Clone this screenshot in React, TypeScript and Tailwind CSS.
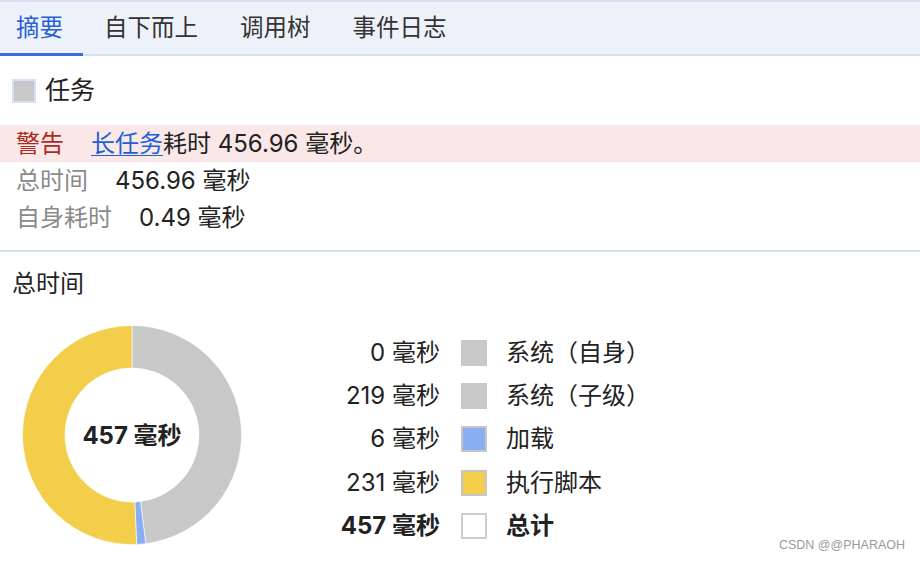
import React from "react";

const CX = 110;
const CY = 110;
const RO = 109.5;
const RI = 67;

function arcPath(a0: number, a1: number) {
  const p = (a: number, r: number) => {
    const rad = ((a - 90) * Math.PI) / 180;
    return [CX + r * Math.cos(rad), CY + r * Math.sin(rad)];
  };
  const large = a1 - a0 > 180 ? 1 : 0;
  const [x0, y0] = p(a0, RO);
  const [x1, y1] = p(a1, RO);
  const [x2, y2] = p(a1, RI);
  const [x3, y3] = p(a0, RI);
  return `M${x0} ${y0} A${RO} ${RO} 0 ${large} 1 ${x1} ${y1} L${x2} ${y2} A${RI} ${RI} 0 ${large} 0 ${x3} ${y3} Z`;
}

const segs = [
  { v: 219.3, c: "#c8c8c8" },
  { v: 6.1, c: "#8aaef3" },
  { v: 231.56, c: "#f2ce4b" },
];

function Donut() {
  const total = segs.reduce((s, x) => s + x.v, 0);
  let acc = 0;
  return (
    <div className="relative w-[220px] h-[220px] shrink-0">
      <svg width="220" height="220" viewBox="0 0 220 220">
        {segs.map((s, i) => {
          const a0 = (acc / total) * 360;
          acc += s.v;
          const a1 = (acc / total) * 360;
          return <path key={i} d={arcPath(a0, a1)} fill={s.c} stroke="#ffffff" strokeWidth="0.6" />;
        })}
      </svg>
      <div className="absolute inset-0 flex items-center justify-center pt-[2px] text-[24px] font-bold text-[#222]">
        457 毫秒
      </div>
    </div>
  );
}

const legend = [
  { v: "0 毫秒", label: "系统（自身）", sw: "bg-[#c8c8c8] border-[#c8c8c8]", bold: false },
  { v: "219 毫秒", label: "系统（子级）", sw: "bg-[#c8c8c8] border-[#c8c8c8]", bold: false },
  { v: "6 毫秒", label: "加载", sw: "bg-[#8aaef3] border-[#c6c6c6]", bold: false },
  { v: "231 毫秒", label: "执行脚本", sw: "bg-[#f2ce4b] border-[#c6c6c6]", bold: false },
  { v: "457 毫秒", label: "总计", sw: "bg-white border-[#cdcdcd]", bold: true },
];

export default function App() {
  return (
    <div className="relative w-[920px] h-[562px] overflow-hidden bg-white text-[#222] font-['Inter','Noto_Sans_CJK_SC',sans-serif]">
      {/* tab bar */}
      <div className="flex h-[56px] border-t-2 border-b-2 border-[#d5e1f5] bg-[#edf2fa] text-[23.5px] text-[#333]">
        <div className="relative flex items-center pl-[16px] pr-[20px] text-[#2b5fd6]">
          摘要
          <span className="absolute left-0 right-0 bottom-[-2px] h-[3px] bg-[#3a6de0]" />
        </div>
        <div className="flex items-center px-[21px]">自下而上</div>
        <div className="flex items-center px-[21px]">调用树</div>
        <div className="flex items-center px-[21px]">事件日志</div>
      </div>

      {/* task header */}
      <div className="flex items-center h-[69px] pt-[1px] pl-[12px]">
        <span className="w-[24px] h-[24px] border-2 border-[#d3e0f7] bg-[#c8c8c8]" />
        <span className="ml-[9px] text-[25px]">任务</span>
      </div>

      {/* details */}
      <div className="text-[24px] pb-[14px]">
        <div className="flex items-center h-[37px] pl-[16px] bg-[#fae8e8]">
          <span className="text-[#b0271d] mr-[27px]">警告</span>
          <span className="text-[#2160d4] underline decoration-1 underline-offset-[3px]">长任务</span>
          <span>耗时 456.96 毫秒。</span>
        </div>
        <div className="flex items-center h-[37px] pl-[16px]">
          <span className="text-[#8a8a8a] mr-[27px]">总时间</span>
          <span>456.96 毫秒</span>
        </div>
        <div className="flex items-center h-[37px] pl-[16px]">
          <span className="text-[#8a8a8a] mr-[27px]">自身耗时</span>
          <span>0.49 毫秒</span>
        </div>
      </div>

      <div className="h-[2px] bg-[#d5e1f5]" />

      {/* total time section */}
      <div className="pl-[12px] pt-[16px] text-[24px] leading-[31px]">总时间</div>
      <div className="flex items-start mt-[26px] pl-[22px]">
        <Donut />
        <div className="ml-[58px] mt-[6px] flex flex-col text-[24px]">
          {legend.map((r, i) => (
            <div key={i} className="flex items-center h-[43.3px]">
              <span className={`w-[140px] text-right ${r.bold ? "font-bold" : ""}`}>{r.v}</span>
              <span className={`ml-[21px] w-[26px] h-[26px] border-2 ${r.sw}`} />
              <span className={`ml-[19px] ${r.bold ? "font-bold" : ""}`}>{r.label}</span>
            </div>
          ))}
        </div>
      </div>

      <div className="absolute right-[15px] bottom-[7px] text-[12.5px] text-[#9a9a9a] font-['Liberation_Sans',sans-serif]">
        CSDN @@PHARAOH
      </div>
    </div>
  );
}
